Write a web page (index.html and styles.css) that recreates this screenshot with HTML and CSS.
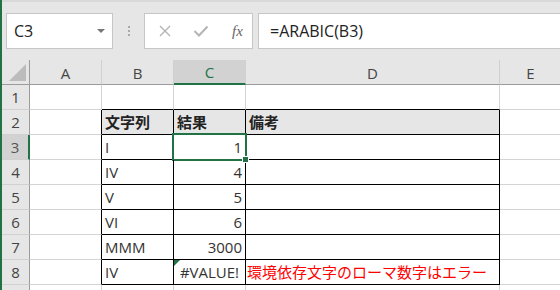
FILE: index.html
```html
<!DOCTYPE html>
<html lang="ja">
<head>
    <meta charset="UTF-8">
    <title>ARABIC</title>
    <link rel="stylesheet" href="styles.css">
</head>
<body>
    <div class="app">
        <div class="toolbar">
            <div class="name-box">
                <span>C3</span>
                <span class="arrow"></span>
            </div>
            <div class="grip"><i></i><i></i><i></i></div>
            <div class="fx-buttons">
                <svg width="14" height="14" viewBox="0 0 14 14"><path d="M2 2 L12 12 M12 2 L2 12" stroke="#b4b4b4" stroke-width="1.4" fill="none"/></svg>
                <svg width="16" height="14" viewBox="0 0 16 14"><path d="M1.5 7 L6 11.5 L14.5 2.5" stroke="#b4b4b4" stroke-width="2" fill="none"/></svg>
                <span class="fx">fx</span>
            </div>
            <div class="formula">=ARABIC(B3)</div>
        </div>

        <div class="sheet">
            <div class="corner"><span class="tri"></span></div>
            <div class="col-hd">A</div>
            <div class="col-hd">B</div>
            <div class="col-hd sel">C</div>
            <div class="col-hd">D</div>
            <div class="col-hd">E</div>

            <div class="row-hd">1</div>
            <div class="cell"></div>
            <div class="cell top-b"></div>
            <div class="cell top-b"></div>
            <div class="cell top-b"></div>
            <div class="cell"></div>

            <div class="row-hd">2</div>
            <div class="cell left-b"></div>
            <div class="cell tb head">文字列</div>
            <div class="cell tb head">結果</div>
            <div class="cell tb head">備考</div>
            <div class="cell"></div>

            <div class="row-hd sel">3</div>
            <div class="cell left-b"></div>
            <div class="cell tb">I</div>
            <div class="cell tb num active">1</div>
            <div class="cell tb"></div>
            <div class="cell"></div>

            <div class="row-hd">4</div>
            <div class="cell left-b"></div>
            <div class="cell tb">IV</div>
            <div class="cell tb num">4</div>
            <div class="cell tb"></div>
            <div class="cell"></div>

            <div class="row-hd">5</div>
            <div class="cell left-b"></div>
            <div class="cell tb">V</div>
            <div class="cell tb num">5</div>
            <div class="cell tb"></div>
            <div class="cell"></div>

            <div class="row-hd">6</div>
            <div class="cell left-b"></div>
            <div class="cell tb">VI</div>
            <div class="cell tb num">6</div>
            <div class="cell tb"></div>
            <div class="cell"></div>

            <div class="row-hd">7</div>
            <div class="cell left-b"></div>
            <div class="cell tb">MMM</div>
            <div class="cell tb num">3000</div>
            <div class="cell tb"></div>
            <div class="cell"></div>

            <div class="row-hd">8</div>
            <div class="cell left-b"></div>
            <div class="cell tb">IV</div>
            <div class="cell tb err">#VALUE!</div>
            <div class="cell tb note">環境依存文字のローマ数字はエラー</div>
            <div class="cell"></div>

            <div class="row-hd"></div>
            <div class="cell"></div>
            <div class="cell"></div>
            <div class="cell"></div>
            <div class="cell"></div>
            <div class="cell"></div>
        </div>
    </div>
</body>
</html>
```

FILE: styles.css
```css
* {
    box-sizing: border-box;
}
body {
    margin: 0;
    width: 560px;
    height: 290px;
    overflow: hidden;
    background: #fff;
    font-family: 'Open Sans', 'Noto Sans CJK JP', sans-serif;
    color: #333;
}
.app {
    border-left: 2px solid #217346;
    height: 290px;
    overflow: hidden;
}
.toolbar {
    height: 60px;
    background: #e6e6e6;
    border-top: 2px solid #d9d9d9;
    padding-top: 11px;
    display: flex;
    align-items: flex-start;
}
.name-box {
    margin-left: 4px;
    width: 107px;
    height: 36px;
    background: #fff;
    border: 1px solid #c6c6c6;
    display: flex;
    align-items: center;
    justify-content: space-between;
    padding: 0 7px 0 7px;
    font-size: 16px;
    color: #222;
}
.arrow {
    width: 0;
    height: 0;
    border-left: 4px solid transparent;
    border-right: 4px solid transparent;
    border-top: 4px solid #777;
}
.grip {
    width: 31px;
    height: 36px;
    display: flex;
    flex-direction: column;
    align-items: center;
    justify-content: center;
    gap: 2px;
}
.grip i {
    width: 2px;
    height: 2px;
    background: #aaa;
}
.fx-buttons {
    width: 109px;
    height: 36px;
    background: #fff;
    border: 1px solid #c6c6c6;
    display: flex;
    align-items: center;
    padding-left: 13px;
    gap: 21px;
}
.fx {
    font-family: 'Liberation Serif', serif;
    font-style: italic;
    font-size: 15px;
    color: #666;
    margin-left: 2px;
}
.formula {
    margin-left: 5px;
    flex: 1;
    height: 36px;
    background: #fff;
    border: 1px solid #c6c6c6;
    border-right: none;
    font-size: 16px;
    color: #222;
    padding-left: 11px;
    line-height: 34px;
}
.sheet {
    display: grid;
    grid-template-columns: 28px 72px 72px 72px 254px 62px;
    grid-template-rows: repeat(10, 25px);
}
.corner,
.col-hd,
.row-hd {
    background: #e6e6e6;
    color: #444;
    font-size: 15px;
    display: flex;
    align-items: center;
    justify-content: center;
}
.corner {
    border-right: 1px solid #9b9b9b;
    border-bottom: 1px solid #9b9b9b;
    position: relative;
}
.tri {
    position: absolute;
    right: 3px;
    bottom: 3px;
    width: 0;
    height: 0;
    border-left: 17px solid transparent;
    border-bottom: 17px solid #bcbcbc;
}
.col-hd {
    border-bottom: 1px solid #9b9b9b;
    border-right: 1px solid #d0d0d0;
    padding-top: 1px;
}
.col-hd.sel {
    background: #d2d2d2;
    color: #217346;
    border-bottom: 2px solid #217346;
}
.row-hd {
    border-right: 1px solid #9b9b9b;
    border-bottom: 1px solid #d0d0d0;
}
.row-hd.sel {
    background: #d2d2d2;
    color: #555;
    border-right: 2px solid #217346;
}
.cell {
    border-right: 1px solid #d4d4d4;
    border-bottom: 1px solid #d4d4d4;
    font-size: 15px;
    line-height: 24px;
    padding: 0 3px;
    color: #333;
    white-space: nowrap;
    position: relative;
}
.cell.top-b {
    border-bottom-color: #000;
}
.cell.left-b {
    border-right-color: #000;
}
.cell.tb {
    border-right-color: #000;
    border-bottom-color: #000;
}
.cell.head {
    background: #e7e6e6;
    color: #222;
    font-weight: 700;
}
.cell.num {
    text-align: right;
}
.cell.active::after {
    content: "";
    position: absolute;
    left: -2px;
    top: -2px;
    right: -2px;
    bottom: -2px;
    border: 2px solid #217346;
}
.cell.active::before {
    content: "";
    position: absolute;
    right: -4px;
    bottom: -4px;
    width: 5px;
    height: 5px;
    background: #217346;
    border: 1px solid #fff;
    z-index: 1;
}
.cell.err {
    text-align: center;
    padding: 0 1px;
}
.cell.err::before {
    content: "";
    position: absolute;
    left: 0;
    top: 0;
    width: 0;
    height: 0;
    border-top: 6px solid #217346;
    border-right: 6px solid transparent;
}
.cell.note {
    color: #f00;
    padding-left: 1px;
}
```
